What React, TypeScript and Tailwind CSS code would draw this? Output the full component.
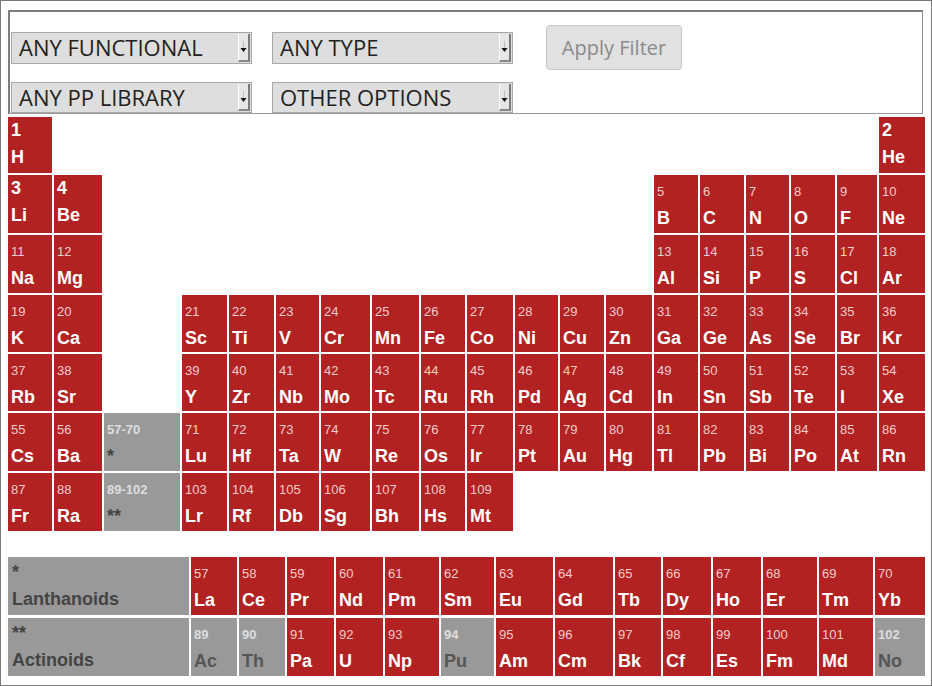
import React from "react";

type Kind = "r" | "b" | "g" | "p";
type Entry = [string, string, Kind?];

const MAIN_COLS =
  "grid grid-cols-[44px_48px_76px_45px_45px_43px_49px_47px_44px_46px_43px_44px_46px_44px_44px_43px_44px_40px_46px] gap-x-[2px]";
const LANTH_COLS =
  "grid grid-cols-[181px_46px_46px_47px_47px_54px_53px_57px_58px_46px_48px_48px_54px_54px_50px] gap-x-[2px]";

const ROW_H = ["h-[56px]", "h-[58px]", "h-[58px]", "h-[57px]", "h-[57px]", "h-[58px]", "h-[58px]"];

const rows: Record<number, Entry>[] = [
  { 1: ["1", "H", "b"], 19: ["2", "He", "b"] },
  {
    1: ["3", "Li", "b"], 2: ["4", "Be", "b"],
    14: ["5", "B"], 15: ["6", "C"], 16: ["7", "N"], 17: ["8", "O"], 18: ["9", "F"], 19: ["10", "Ne"],
  },
  {
    1: ["11", "Na"], 2: ["12", "Mg"],
    14: ["13", "Al"], 15: ["14", "Si"], 16: ["15", "P"], 17: ["16", "S"], 18: ["17", "Cl"], 19: ["18", "Ar"],
  },
  {
    1: ["19", "K"], 2: ["20", "Ca"], 4: ["21", "Sc"], 5: ["22", "Ti"], 6: ["23", "V"], 7: ["24", "Cr"],
    8: ["25", "Mn"], 9: ["26", "Fe"], 10: ["27", "Co"], 11: ["28", "Ni"], 12: ["29", "Cu"], 13: ["30", "Zn"],
    14: ["31", "Ga"], 15: ["32", "Ge"], 16: ["33", "As"], 17: ["34", "Se"], 18: ["35", "Br"], 19: ["36", "Kr"],
  },
  {
    1: ["37", "Rb"], 2: ["38", "Sr"], 4: ["39", "Y"], 5: ["40", "Zr"], 6: ["41", "Nb"], 7: ["42", "Mo"],
    8: ["43", "Tc"], 9: ["44", "Ru"], 10: ["45", "Rh"], 11: ["46", "Pd"], 12: ["47", "Ag"], 13: ["48", "Cd"],
    14: ["49", "In"], 15: ["50", "Sn"], 16: ["51", "Sb"], 17: ["52", "Te"], 18: ["53", "I"], 19: ["54", "Xe"],
  },
  {
    1: ["55", "Cs"], 2: ["56", "Ba"], 3: ["57-70", "*", "p"], 4: ["71", "Lu"], 5: ["72", "Hf"], 6: ["73", "Ta"],
    7: ["74", "W"], 8: ["75", "Re"], 9: ["76", "Os"], 10: ["77", "Ir"], 11: ["78", "Pt"], 12: ["79", "Au"],
    13: ["80", "Hg"], 14: ["81", "Tl"], 15: ["82", "Pb"], 16: ["83", "Bi"], 17: ["84", "Po"], 18: ["85", "At"],
    19: ["86", "Rn"],
  },
  {
    1: ["87", "Fr"], 2: ["88", "Ra"], 3: ["89-102", "**", "p"], 4: ["103", "Lr"], 5: ["104", "Rf"],
    6: ["105", "Db"], 7: ["106", "Sg"], 8: ["107", "Bh"], 9: ["108", "Hs"], 10: ["109", "Mt"],
  },
];

const lanthanoids: Entry[] = [
  ["57", "La"], ["58", "Ce"], ["59", "Pr"], ["60", "Nd"], ["61", "Pm"], ["62", "Sm"], ["63", "Eu"],
  ["64", "Gd"], ["65", "Tb"], ["66", "Dy"], ["67", "Ho"], ["68", "Er"], ["69", "Tm"], ["70", "Yb"],
];

const actinoids: Entry[] = [
  ["89", "Ac", "g"], ["90", "Th", "g"], ["91", "Pa"], ["92", "U"], ["93", "Np"], ["94", "Pu", "g"],
  ["95", "Am"], ["96", "Cm"], ["97", "Bk"], ["98", "Cf"], ["99", "Es"], ["100", "Fm"], ["101", "Md"],
  ["102", "No", "g"],
];

// a couple of numbers carry a warmer tint in the original
const warm = new Set(["44", "47"]);

function Cell({ e }: { e: Entry }) {
  const [num, sym, kind = "r"] = e;
  if (kind === "b") {
    return (
      <div className="bg-[#b22222] pl-[3px] pt-[2px] text-white font-bold">
        <div className="text-[18px] leading-[22px]">{num}</div>
        <div className="text-[18px] leading-[22px] mt-[5px]">{sym}</div>
      </div>
    );
  }
  const gray = kind === "g" || kind === "p";
  return (
    <div className={gray ? "bg-[#999999] pl-[3px] pt-[9px]" : "bg-[#b22222] pl-[3px] pt-[9px]"}>
      <div
        className={
          gray
            ? "text-[13px] leading-[15px] font-bold text-[#dedede]"
            : warm.has(num)
              ? "text-[13px] leading-[15px] text-[#f6d2a8]"
              : "text-[13px] leading-[15px] text-[#f3cccc]"
        }
      >
        {num}
      </div>
      <div
        className={
          kind === "p"
            ? "text-[18px] leading-[22px] mt-[8px] font-bold text-[#444]"
            : gray
              ? "text-[18px] leading-[22px] mt-[8px] font-bold text-[#555]"
              : "text-[18px] leading-[22px] mt-[8px] font-bold text-white"
        }
      >
        {sym}
      </div>
    </div>
  );
}

function SelectBox({ label }: { label: string }) {
  return (
    <div className="relative w-[241px] h-full bg-[#dedede] border border-[#a8a8a8] flex items-center pl-[7px] text-[22px] text-[#222] font-['Open_Sans',sans-serif]">
      <span>{label}</span>
      <div className="absolute right-[1px] top-[1px] bottom-[1px] w-[12px] bg-[#e6e6e6] border-l border-l-white border-r-2 border-r-[#7a7a7a] border-b-2 border-b-[#8a8a8a] flex items-center justify-center">
        <svg width="7" height="16" viewBox="0 0 7 16">
          <line x1="3.5" y1="2" x2="3.5" y2="9" stroke="#bdbdbd" strokeWidth="1" />
          <path d="M0.5 9 H6.5 L3.5 13 Z" fill="#111" />
        </svg>
      </div>
    </div>
  );
}

export default function App() {
  return (
    <div className="w-[932px] h-[686px] border border-[#787878] overflow-hidden bg-white font-['Liberation_Sans',Arial,sans-serif]">
      <div className="ml-[7px] mt-[9px] w-[915px] border-t-2 border-l-2 border-t-[#7d7d7d] border-l-[#7d7d7d] border-r border-b border-r-[#8c8c8c] border-b-[#9a9a9a]">
        <div className="pt-[13px] pl-[1px] flex items-center h-[58px]">
          <div className="h-[32px] flex items-center">
            <SelectBox label="ANY FUNCTIONAL" />
          </div>
          <div className="h-[32px] ml-[20px] flex items-center">
            <SelectBox label="ANY TYPE" />
          </div>
          <button className="ml-[33px] w-[136px] h-[45px] bg-[#e1e1e1] border border-[#c8c8c8] rounded-[4px] text-[20px] text-[#8a8a8a] font-['Open_Sans',sans-serif]">
            Apply Filter
          </button>
        </div>
        <div className="mt-[12px] pl-[1px] flex h-[31px]">
          <SelectBox label="ANY PP LIBRARY" />
          <div className="ml-[20px] h-full">
            <SelectBox label="OTHER OPTIONS" />
          </div>
        </div>
      </div>

      <div className="ml-[7px] mt-[3px] flex flex-col gap-y-[2px]">
        {rows.map((row, ri) => (
          <div key={ri} className={`${MAIN_COLS} ${ROW_H[ri]}`}>
            {Array.from({ length: 19 }, (_, ci) => {
              const e = row[ci + 1];
              return e ? <Cell key={ci} e={e} /> : <div key={ci} />;
            })}
          </div>
        ))}
      </div>

      <div className="ml-[7px] mt-[26px] flex flex-col gap-y-[3px]">
        <div className={`${LANTH_COLS} h-[58px]`}>
          <div className="bg-[#999999] pl-[4px] pt-[4px] font-bold text-[#444]">
            <div className="text-[18px] leading-[22px]">*</div>
            <div className="text-[18px] leading-[22px] mt-[5px]">Lanthanoids</div>
          </div>
          {lanthanoids.map((e) => (
            <Cell key={e[0]} e={e} />
          ))}
        </div>
        <div className={`${LANTH_COLS} h-[58px]`}>
          <div className="bg-[#999999] pl-[4px] pt-[4px] font-bold text-[#444]">
            <div className="text-[18px] leading-[22px]">**</div>
            <div className="text-[18px] leading-[22px] mt-[5px]">Actinoids</div>
          </div>
          {actinoids.map((e) => (
            <Cell key={e[0]} e={e} />
          ))}
        </div>
      </div>
    </div>
  );
}
